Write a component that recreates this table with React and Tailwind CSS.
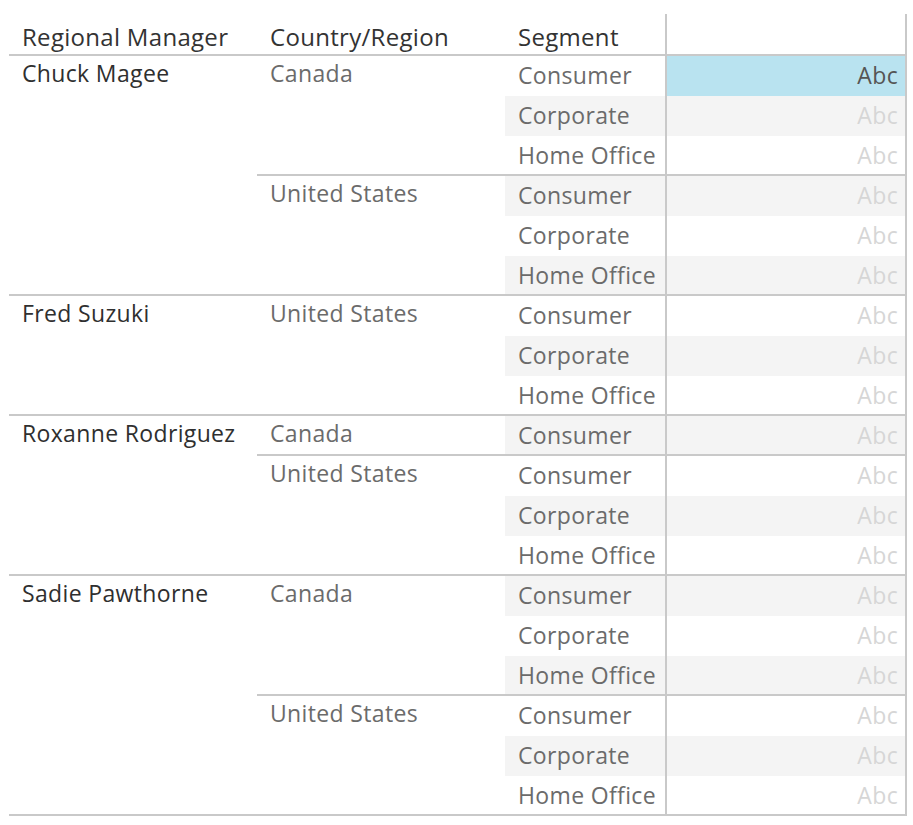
import React from 'react';

const ALL = ['Consumer', 'Corporate', 'Home Office'];

const data = [
  { manager: 'Chuck Magee', countries: [['Canada', ALL], ['United States', ALL]] },
  { manager: 'Fred Suzuki', countries: [['United States', ALL]] },
  { manager: 'Roxanne Rodriguez', countries: [['Canada', ['Consumer']], ['United States', ALL]] },
  { manager: 'Sadie Pawthorne', countries: [['Canada', ALL], ['United States', ALL]] },
];

const App = () => {
  let idx = 0;

  return (
    <div className="min-h-screen bg-white font-['Open_Sans',sans-serif] text-[23px] tracking-[0.35px] pt-[14px] pl-[9px]">
      <div className="w-[898px]">
        {/* header */}
        <div className="flex h-[42px] border-b-2 border-[#c9c9c9] text-[#333333] text-[24px] tracking-[0.3px]">
          <div className="w-[248px] pl-[13px] pt-[6px] leading-[33px] whitespace-nowrap">Regional Manager</div>
          <div className="w-[248px] pl-[13px] pt-[6px] leading-[33px] whitespace-nowrap">Country/Region</div>
          <div className="w-[160px] pl-[13px] pt-[6px] leading-[33px]">Segment</div>
          <div className="flex-1 border-l-2 border-r-2 border-[#c9c9c9]"></div>
        </div>

        {data.map((g) => (
          <div key={g.manager} className="flex border-b-2 border-[#c9c9c9]">
            <div className="w-[248px] pl-[13px] leading-[34px] text-[#2f2f2f] whitespace-nowrap">{g.manager}</div>
            <div className="flex-1 flex flex-col">
              {g.countries.map(([country, segs], ci) => {
                const lastCountry = ci === g.countries.length - 1;
                return (
                  <div
                    key={country}
                    className={'flex ' + (lastCountry ? '' : 'border-b-2 border-[#c9c9c9]')}
                  >
                    <div className="w-[248px] pl-[13px] leading-[34px] text-[#6b6b6b]">{country}</div>
                    <div className="flex-1 flex flex-col">
                      {segs.map((s, si) => {
                        const i = idx++;
                        const last = si === segs.length - 1;
                        const gray = i % 2 === 1;
                        const hi = i === 0;
                        return (
                          <div key={s} className={'flex ' + (last ? 'h-[38px]' : 'h-[40px]')}>
                            <div
                              className={
                                'w-[160px] pl-[13px] leading-[38px] text-[#6b6b6b] whitespace-nowrap ' +
                                (gray ? 'bg-[#f4f4f4]' : 'bg-white')
                              }
                            >
                              {s}
                            </div>
                            <div
                              className={
                                'flex-1 border-l-2 border-r-2 border-[#c9c9c9] pr-[7px] text-right leading-[38px] ' +
                                (hi
                                  ? 'bg-[#b9e3f0] text-[#555555]'
                                  : gray
                                  ? 'bg-[#f4f4f4] text-[#d6d6d6]'
                                  : 'bg-white text-[#d6d6d6]')
                              }
                            >
                              Abc
                            </div>
                          </div>
                        );
                      })}
                    </div>
                  </div>
                );
              })}
            </div>
          </div>
        ))}
      </div>
    </div>
  );
};

export default App;
